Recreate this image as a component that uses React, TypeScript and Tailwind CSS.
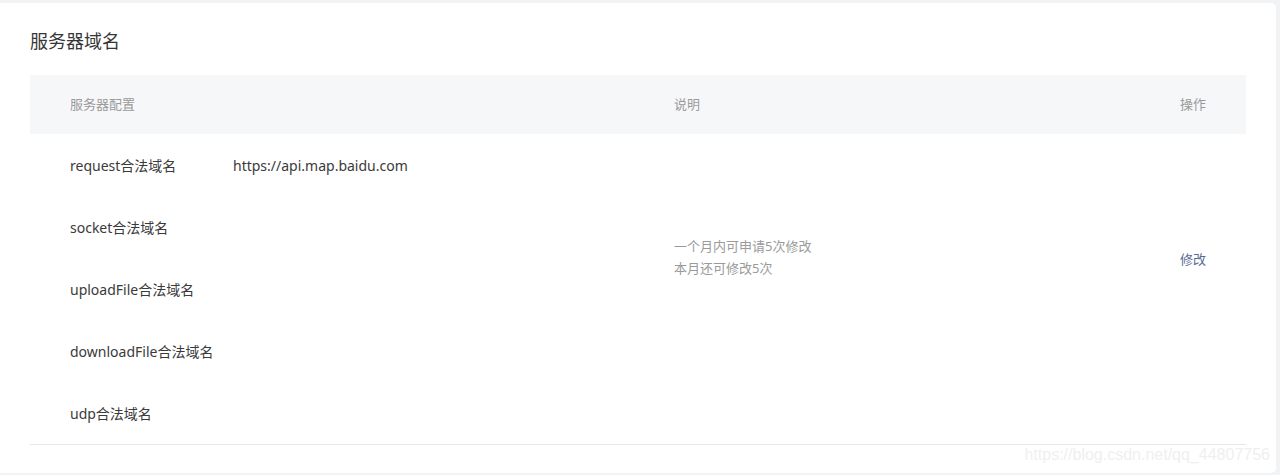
const rows = [
  { name: 'request合法域名', value: 'https://api.map.baidu.com' },
  { name: 'socket合法域名', value: '' },
  { name: 'uploadFile合法域名', value: '' },
  { name: 'downloadFile合法域名', value: '' },
  { name: 'udp合法域名', value: '' },
]

export default function App() {
  return (
    <div
      className="relative h-[475px] w-[1280px] bg-[#f2f3f5] pt-[3px] pr-[4px] pb-[2px]"
      style={{ fontFamily: '"Noto Sans", "Noto Sans CJK SC", sans-serif' }}
    >
      <div className="h-full rounded-r-[5px] bg-white px-[30px] pt-[26px]">
        <h2 className="text-[18px] leading-[24px] text-[#353535]">服务器域名</h2>

        <div className="mt-[22px]">
          {/* header */}
          <div className="flex h-[59px] items-center bg-[#f6f7f9] px-10 text-[13px] text-[#9a9a9a]">
            <div className="w-[604px]">服务器配置</div>
            <div className="flex-1">说明</div>
            <div className="text-right">操作</div>
          </div>

          {/* body */}
          <div className="flex border-b border-[#e7e7e7] px-10">
            <div className="w-[604px]">
              {rows.map(r => (
                <div key={r.name} className="flex h-[62px] items-center text-[14px] text-[#3a3a3a]">
                  <span className="w-[163px]">{r.name}</span>
                  <span>{r.value}</span>
                </div>
              ))}
            </div>
            <div className="flex flex-1 flex-col pt-[101px] text-[13px] leading-[22px] text-[#9a9a9a]">
              <span>一个月内可申请5次修改</span>
              <span>本月还可修改5次</span>
            </div>
            <div className="pt-[112px]">
              <a className="cursor-pointer text-[13px] leading-[22px] text-[#576b95]">修改</a>
            </div>
          </div>
        </div>
      </div>

      <span
        className="absolute right-[10px] bottom-[8px] text-[16px] text-[#efefef]"
        style={{ fontFamily: '"Liberation Sans", Arial, sans-serif' }}
      >
        https://blog.csdn.net/qq_44807756
      </span>
    </div>
  )
}
